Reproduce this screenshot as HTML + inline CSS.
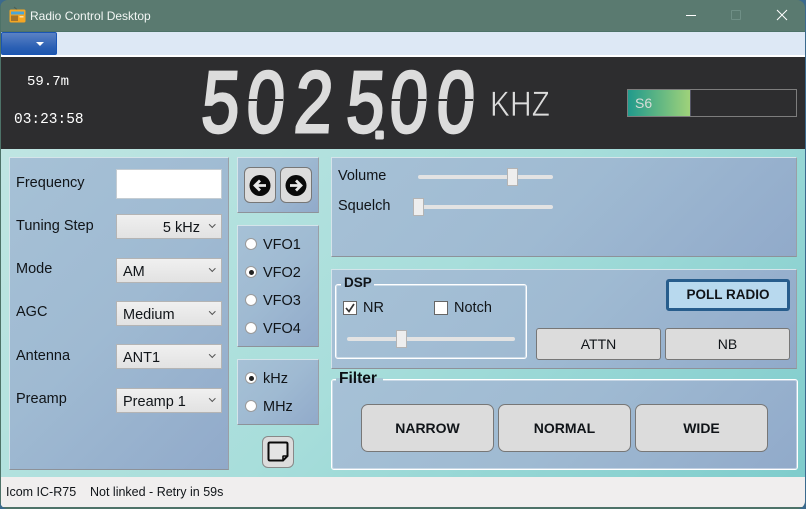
<!DOCTYPE html>
<html><head><meta charset="utf-8"><title>Radio Control Desktop</title>
<style>
*{box-sizing:border-box;margin:0;padding:0}
html,body{width:806px;height:509px;overflow:hidden;background:#3b6a8e}
body{font-family:"Liberation Sans",sans-serif;font-size:14.5px;color:#101418;position:relative}
#win{position:absolute;left:0;top:0;width:805px;height:509px;background:#4d7268;border-radius:8px;overflow:hidden}
.a{position:absolute}
.t{position:absolute;white-space:nowrap;line-height:18px}
.l{margin-top:1px}
#content{left:1px;top:149px;width:804px;height:328px;background:linear-gradient(135deg,#bfe5e2 0%,#a8dedb 50%,#7fcccc 100%)}
.panel{position:absolute;background:linear-gradient(135deg,#a6c1d6 0%,#9fbad2 50%,#91aaca 100%);border:1px solid #d5e4ea;border-right-color:#9a9fa6;border-bottom-color:#8d9299}
.sel{position:absolute;left:116px;width:106px;height:25px;background:linear-gradient(#f0f0f0,#e2e2e2);border:1px solid #b4b4b4;line-height:26px;font-size:14.5px;padding-left:6px}
.sel:after{content:"";position:absolute;right:7px;top:7px;width:3.5px;height:3.5px;border-right:1px solid #555;border-bottom:1px solid #555;transform:rotate(45deg)}
.radio{position:absolute;left:245px;width:12px;height:12px;border-radius:50%;background:#fff;border:1px solid #9a9a9a}
.radio.on:after{content:"";position:absolute;left:2.5px;top:2.5px;width:5px;height:5px;border-radius:50%;background:#222}
.btn{position:absolute;background:#dcdcdc;border:1px solid #777;border-radius:3px;text-align:center}
.b{font-weight:bold}
.track{position:absolute;height:4px;background:#e3e3e3;border-radius:2px}
.handle{position:absolute;width:11px;height:18px;background:#eeeeee;border:1px solid #b4b4b4}
.box{position:absolute;width:14px;height:14px;background:#fff;border:1px solid #666}
</style></head><body>
<div id="win">
<div class="a" style="left:1px;top:0;width:804px;height:31px;background:#5a7a70"></div>
<svg class="a" style="left:9px;top:6px" width="17" height="17" viewBox="0 0 17 17"><path d="M8 3.5 L5 1" stroke="#4d5d50" fill="none"/><rect x="0.5" y="3.5" width="16" height="13" rx="1.5" fill="#f5a623"/><rect x="2" y="5.5" width="13" height="3" fill="#4aa5d8"/><rect x="2" y="9.5" width="7" height="5.5" fill="#a5742a"/><rect x="10.5" y="10" width="4" height="1.5" fill="#fbe0a0"/></svg>
<div class="t" style="left:30px;top:7px;color:#f2f6f4;font-size:12px">Radio Control Desktop</div>
<div class="a" style="left:686px;top:15px;width:10px;height:1px;background:#fff"></div>
<div class="a" style="left:731px;top:10px;width:10px;height:10px;border:1px solid #6f8f86;border-radius:1px"></div>
<svg class="a" style="left:776px;top:9px" width="12" height="12" viewBox="0 0 12 12"><path d="M1 1 L11 11 M11 1 L1 11" stroke="#fff" stroke-width="1" fill="none"/></svg>

<div class="a" style="left:1px;top:32px;width:804px;height:23px;background:#dde8f5"></div>
<div class="a" style="left:1px;top:32px;width:56px;height:23px;background:linear-gradient(#5b82c4,#2a5fb4 70%,#1f57ae);border:1px solid #1a55b5;border-radius:2px"></div>
<div class="a" style="left:36px;top:42px;border-left:4px solid transparent;border-right:4px solid transparent;border-top:4px solid #fff"></div>
<div class="a" style="left:1px;top:55px;width:804px;height:2px;background:#fff"></div>

<div class="a" style="left:1px;top:57px;width:804px;height:92px;background:#2d2d2f"></div>
<div class="t" style="left:27px;top:73px;color:#fff;font-family:'Liberation Mono',monospace;font-size:14px">59.7m</div>
<div class="t" style="left:14px;top:111px;color:#fff;font-family:'Liberation Mono',monospace;font-size:14.5px">03:23:58</div>

<svg class="a" style="left:0;top:57px" width="806" height="92" viewBox="0 57 806 92">
<g fill="#dcdcdc" stroke="#dcdcdc" stroke-width="3" stroke-linejoin="miter" font-family="Liberation Sans, sans-serif" font-size="87">
<g transform="translate(200 132) skewX(-4) scale(.78 1)"><text x="0" y="0">5</text></g>
<g transform="translate(245 132) skewX(-4) scale(.78 1)"><text x="0" y="0">0</text></g>
<g transform="translate(293 132) skewX(-4) scale(.78 1)"><text x="0" y="0">2</text></g>
<g transform="translate(345 132) skewX(-4) scale(.78 1)"><text x="0" y="0">5</text></g>
<text x="374" y="138" font-size="40" font-weight="bold" stroke-linejoin="round">.</text>
<g transform="translate(388 132) skewX(-4) scale(.78 1)"><text x="0" y="0">0</text></g>
<g transform="translate(435 132) skewX(-4) scale(.78 1)"><text x="0" y="0">0</text></g>
</g>
<g fill="#2d2d2f"><rect x="247" y="99" width="10" height="2"/><rect x="273" y="99" width="10" height="2"/><rect x="390" y="99" width="10" height="2"/><rect x="416" y="99" width="10" height="2"/><rect x="437" y="99" width="10" height="2"/><rect x="463" y="99" width="10" height="2"/></g>
<text x="490" y="116" fill="#dcdcdc" font-family="Liberation Sans, sans-serif" font-size="35" textLength="60" lengthAdjust="spacingAndGlyphs" stroke="#2d2d2f" stroke-width=".7">KHZ</text>
</svg>

<div class="a" style="left:627px;top:89px;width:170px;height:28px;border:1px solid #7d7d7d"></div>
<div class="a" style="left:628px;top:90px;width:63px;height:26px;background:linear-gradient(90deg,#219a8c,#9fd27a);border-right:1px solid #556"></div>
<div class="t" style="left:635px;top:94px;color:#d8dcd8;font-size:14px">S6</div>

<div class="a" id="content"></div>

<div class="panel" style="left:9px;top:157px;width:220px;height:313px"></div>
<div class="t l" style="left:16px;top:173px">Frequency</div>
<div class="a" style="left:116px;top:169px;width:106px;height:30px;background:#fff;border:1px solid #c4ccd2"></div>
<div class="t l" style="left:16px;top:216px">Tuning Step</div>
<div class="sel" style="top:214px;text-align:right;padding-right:21px">5 kHz</div>
<div class="t l" style="left:16px;top:259px">Mode</div>
<div class="sel" style="top:258px">AM</div>
<div class="t l" style="left:16px;top:302px">AGC</div>
<div class="sel" style="top:301px">Medium</div>
<div class="t l" style="left:16px;top:346px">Antenna</div>
<div class="sel" style="top:344px">ANT1</div>
<div class="t l" style="left:16px;top:389px">Preamp</div>
<div class="sel" style="top:388px">Preamp 1</div>

<div class="panel" style="left:237px;top:157px;width:82px;height:56px"></div>
<div class="btn" style="left:244px;top:167px;width:32px;height:36px;border-radius:6px"></div>
<div class="btn" style="left:280px;top:167px;width:32px;height:36px;border-radius:6px"></div>
<svg class="a" style="left:249px;top:175px" width="22" height="22" viewBox="0 0 22 22"><circle cx="11" cy="10.5" r="10.5" fill="#0a0a0a"/><path d="M17 10.5 H6.5 M11 5.5 L6 10.5 L11 15.5" stroke="#e8e8e8" stroke-width="2.8" fill="none"/></svg>
<svg class="a" style="left:285px;top:175px" width="22" height="22" viewBox="0 0 22 22"><circle cx="11" cy="10.5" r="10.5" fill="#0a0a0a"/><path d="M5 10.5 H15.5 M11 5.5 L16 10.5 L11 15.5" stroke="#e8e8e8" stroke-width="2.8" fill="none"/></svg>

<div class="panel" style="left:237px;top:225px;width:82px;height:122px"></div>
<div class="radio" style="top:238px"></div><div class="t l" style="left:263px;top:235px">VFO1</div>
<div class="radio on" style="top:266px"></div><div class="t l" style="left:263px;top:263px">VFO2</div>
<div class="radio" style="top:294px"></div><div class="t l" style="left:263px;top:291px">VFO3</div>
<div class="radio" style="top:322px"></div><div class="t l" style="left:263px;top:319px">VFO4</div>

<div class="panel" style="left:237px;top:359px;width:82px;height:66px"></div>
<div class="radio on" style="top:372px"></div><div class="t l" style="left:263px;top:369px">kHz</div>
<div class="radio" style="top:400px"></div><div class="t l" style="left:263px;top:397px">MHz</div>

<div class="btn" style="left:262px;top:436px;width:32px;height:32px;border-radius:6px;border-color:#888"></div>
<svg class="a" style="left:267px;top:441px" width="22" height="22" viewBox="0 0 22 22"><path d="M3 1.5 H19 Q20.5 1.5 20.5 3 V15 L16 19.5 H3 Q1.5 19.5 1.5 18 V3 Q1.5 1.5 3 1.5 Z" fill="#e4e4e4" stroke="#0a0a0a" stroke-width="2"/><path d="M20.5 15 H16.5 Q16 15 16 15.5 V19.5" fill="none" stroke="#0a0a0a" stroke-width="1.6"/></svg>

<div class="panel" style="left:331px;top:157px;width:466px;height:100px"></div>
<div class="t l" style="left:338px;top:166px">Volume</div>
<div class="track" style="left:418px;top:175px;width:135px"></div>
<div class="handle" style="left:507px;top:168px"></div>
<div class="t l" style="left:338px;top:196px">Squelch</div>
<div class="track" style="left:414px;top:205px;width:139px"></div>
<div class="handle" style="left:413px;top:198px"></div>

<div class="panel" style="left:331px;top:269px;width:466px;height:100px"></div>
<div class="a" style="left:335px;top:284px;width:192px;height:75px;border:1px solid #fff;box-shadow:inset 0 0 0 1px rgba(255,255,255,.45);border-radius:3px"></div>
<div class="a" style="left:341px;top:283px;width:33px;height:3px;background:#a1bcd3"></div>
<div class="t b" style="left:344px;top:274px;font-size:13.5px">DSP</div>
<div class="box" style="left:343px;top:301px"></div>
<svg class="a" style="left:344px;top:302px" width="12" height="12" viewBox="0 0 12 12"><path d="M2 6 L5 9.5 L10 2" stroke="#333" stroke-width="1.7" fill="none"/></svg>
<div class="t l" style="left:363px;top:298px">NR</div>
<div class="box" style="left:434px;top:301px"></div>
<div class="t l" style="left:454px;top:298px">Notch</div>
<div class="track" style="left:347px;top:337px;width:168px"></div>
<div class="handle" style="left:396px;top:330px"></div>

<div class="a b" style="left:666px;top:279px;width:124px;height:32px;background:#b8d9ee;border:3px solid #275d8c;border-radius:3px;text-align:center;line-height:26px;font-size:13.5px">POLL RADIO</div>
<div class="btn" style="left:536px;top:328px;width:125px;height:32px;line-height:30px;font-size:14px">ATTN</div>
<div class="btn" style="left:665px;top:328px;width:125px;height:32px;line-height:30px;font-size:14px">NB</div>

<div class="panel" style="left:331px;top:379px;width:467px;height:91px;border:1px solid #fff;box-shadow:inset 0 0 0 1px rgba(255,255,255,.4);border-radius:3px"></div>
<div class="a" style="left:336px;top:378px;width:47px;height:3px;background:#a4c6d4"></div>
<div class="t" style="left:339px;top:370px;font-size:15.5px;font-weight:bold;color:#0c1014">Filter</div>
<div class="btn b" style="left:361px;top:404px;width:133px;height:48px;border-radius:7px;line-height:46px;font-size:14px">NARROW</div>
<div class="btn b" style="left:498px;top:404px;width:133px;height:48px;border-radius:7px;line-height:46px;font-size:14px">NORMAL</div>
<div class="btn b" style="left:635px;top:404px;width:133px;height:48px;border-radius:7px;line-height:46px;font-size:14px">WIDE</div>

<div class="a" style="left:1px;top:477px;width:804px;height:30px;background:#f0eeee"></div>
<div class="t" style="left:6px;top:483px;font-size:12.5px">Icom IC-R75</div>
<div class="t" style="left:90px;top:483px;font-size:12.5px">Not linked - Retry in 59s</div>
</div>
</body></html>
